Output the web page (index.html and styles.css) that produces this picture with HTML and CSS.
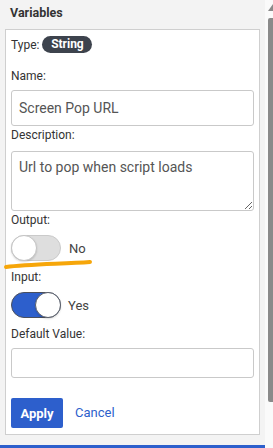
FILE: index.html
```html
<!DOCTYPE html>
<html>
<head>
<meta charset="utf-8">
<link rel="stylesheet" href="styles.css">
</head>
<body>
<div class="main">
  <div class="header">Variables</div>
  <div class="panel">
    <div class="type-row"><span class="type-label">Type:</span><span class="badge">String</span></div>
    <label class="label l-name">Name:</label>
    <input class="field f-name" type="text" value="Screen Pop URL">
    <label class="label l-desc">Description:</label>
    <textarea class="field f-desc">Url to pop when script loads</textarea>
    <label class="label l-out">Output:</label>
    <div class="toggle-row t-out">
      <span class="toggle off"><span class="knob"></span></span>
      <span class="toggle-text">No</span>
    </div>
    <label class="label l-in">Input:</label>
    <div class="toggle-row t-in">
      <span class="toggle on"><span class="knob"></span></span>
      <span class="toggle-text">Yes</span>
    </div>
    <label class="label l-def">Default Value:</label>
    <input class="field f-def" type="text" value="">
    <div class="actions">
      <button class="apply">Apply</button>
      <a class="cancel">Cancel</a>
    </div>
    <svg class="mark" width="90" height="12" viewBox="0 0 90 12"><path d="M3 8 C 25 5, 60 5, 87 3" fill="none" stroke="#f6a60a" stroke-width="4" stroke-linecap="round"/></svg>
  </div>
  <div class="spacer"></div>
  <div class="bottom-line"></div>
</div>
<div class="scrollbar">
  <svg class="arrow" width="8" height="12" viewBox="0 0 8 12"><path d="M3 11 L8 4 L8 11 Z" fill="#8a8a8a"/></svg>
  <div class="thumb"></div>
</div>
</body>
</html>
```
FILE: styles.css
```css
* { box-sizing: border-box; }
html, body { margin: 0; padding: 0; }
body {
  width: 273px;
  height: 448px;
  overflow: hidden;
  background: #f3f3f3;
  font-family: Roboto, "Liberation Sans", sans-serif;
  color: #333;
  display: flex;
}
.main {
  width: 265px;
  display: flex;
  flex-direction: column;
}
.header {
  height: 29px;
  padding-left: 10px;
  padding-top: 5px;
  font-size: 12.5px;
  font-weight: 700;
  line-height: 16px;
  color: #333;
}
.panel {
  position: relative;
  margin-left: 5px;
  width: 255px;
  height: 406px;
  background: #fff;
  border: 1px solid #cfcfcf;
  padding: 6px 5px 4px 5px;
  display: flex;
  flex-direction: column;
}
.type-row {
  display: flex;
  align-items: center;
  height: 17px;
  font-size: 12px;
}
.type-label { margin-right: 3px; }
.badge {
  background: #3d434d;
  color: #fff;
  font-weight: 700;
  font-size: 12px;
  height: 17px;
  line-height: 17px;
  width: 50px;
  text-align: center;
  border-radius: 9px;
}
.label {
  display: block;
  font-size: 12px;
  line-height: 16px;
  color: #333;
}
.l-name { margin-top: 15px; }
.l-desc { margin-top: 1px; }
.l-out { margin-top: 1px; }
.l-in { margin-top: 8px; }
.l-def { margin-top: 8px; }
.field {
  display: block;
  width: 243px;
  border: 1px solid #c9c9c9;
  border-radius: 3px;
  font-family: Roboto, "Liberation Sans", sans-serif;
  font-size: 14px;
  color: #555;
  padding: 0 7px;
  margin: 0;
  outline: none;
  background: #fff;
}
.f-name { margin-top: 6px; height: 36px; }
.f-desc { margin-top: 8px; height: 60px; padding-top: 7px; line-height: 17px; resize: both; }
.f-def { margin-top: 6px; height: 30px; }
.toggle-row {
  display: flex;
  align-items: center;
  height: 26px;
  margin-top: 7px;
}
.toggle {
  position: relative;
  width: 50px;
  height: 26px;
  border-radius: 13px;
  display: block;
}
.toggle.off {
  background: #dedede;
  border: 1px solid #cacaca;
}
.toggle.on {
  background: #2d5fcc;
  border: 1px solid #4a4f5c;
}
.knob {
  position: absolute;
  top: -1px;
  width: 26px;
  height: 26px;
  border-radius: 50%;
  background: #fff;
  border: 1px solid #c4c4c4;
  box-shadow: 0 1px 2px rgba(0,0,0,0.15);
}
.toggle.off .knob { left: -1px; }
.toggle.on .knob { right: -1px; border-color: #5a5f6a; }
.toggle-text {
  margin-left: 8px;
  font-size: 13px;
  color: #444;
}
.t-in .toggle-text { margin-left: 7px; }
.actions {
  display: flex;
  align-items: center;
  margin-top: 20px;
  height: 30px;
}
.apply {
  width: 52px;
  height: 30px;
  background: #2d5fcc;
  color: #fff;
  border: none;
  border-radius: 2px;
  font-family: Roboto, "Liberation Sans", sans-serif;
  font-weight: 700;
  font-size: 13px;
  padding: 0;
  margin: 0;
}
.cancel {
  margin-left: 12px;
  font-size: 13px;
  color: #2d5fcc;
  margin-top: -2px;
}
.mark {
  position: absolute;
  left: -3px;
  top: 229px;
}
.spacer { height: 10px; }
.bottom-line {
  height: 3px;
  background: #2d5fcc;
}
.scrollbar {
  width: 8px;
  background: #fafafa;
  position: relative;
}
.arrow {
  position: absolute;
  left: 0;
  top: 0;
}
.thumb {
  position: absolute;
  left: 3px;
  top: 18px;
  width: 5px;
  height: 384px;
  background: #8a8a8a;
  border-radius: 2px 0 0 2px;
}
```
